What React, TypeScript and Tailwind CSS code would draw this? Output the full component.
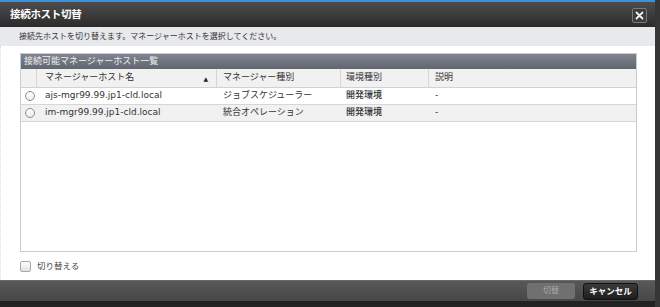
import React from 'react';

const jp = "font-['DejaVu_Sans','Noto_Sans_CJK_JP',sans-serif]";

const rows = [
  { host: 'ajs-mgr99.99.jp1-cld.local', kind: 'ジョブスケジューラー', env: '開発環境', desc: '-' },
  { host: 'im-mgr99.99.jp1-cld.local', kind: '統合オペレーション', env: '開発環境', desc: '-' },
];

const Radio = () => (
  <span className="block w-[10px] h-[10px] rounded-full border border-[#8a8a8a] bg-gradient-to-b from-white to-[#ececec]" />
);

export default function App() {
  return (
    <div className={`w-[660px] h-[307px] flex bg-white ${jp}`}>
      <div className="w-[655px] flex flex-col">
        <div className="h-[2px] bg-[#3f8fd4]" />
        <div className="h-[25px] flex items-center justify-between pl-[10px] pr-[8px] bg-gradient-to-b from-[#4d4d4d] to-[#2b2b2b]">
          <span className="text-[10.5px] font-bold text-white tracking-[-0.3px]">接続ホスト切替</span>
          <button className="w-[15px] h-[15px] mt-[1px] flex items-center justify-center rounded-[2px] border border-[#7a7a7a] bg-[#3c3c3c]">
            <svg width="9" height="9" viewBox="0 0 9 9">
              <path d="M1.5 1.5 L7.5 7.5 M7.5 1.5 L1.5 7.5" stroke="#f2f2f2" strokeWidth="1.8" strokeLinecap="round" />
            </svg>
          </button>
        </div>
        <div className="h-[19px] flex items-center pl-[19px] bg-[#e7e9ed] text-[8px] text-[#333]">
          接続先ホストを切り替えます。マネージャーホストを選択してください。
        </div>
        <div className="flex-1 flex flex-col pl-[19px] pr-[18px] pt-[7px] bg-white border-l border-dotted border-[#dcdcdc]">
          <div className="h-[199px] flex flex-col border border-[#c9cbd2] bg-white">
            <div className="h-[15px] flex items-center pl-[3px] bg-gradient-to-b from-[#80848e] to-[#626670] text-[9px] text-[#eef0f3]">
              接続可能マネージャーホスト一覧
            </div>
            <div className="h-[19px] flex text-[9px] text-[#333] bg-[#f1f1f1] border-b border-[#d2d2d2]">
              <div className="w-[16px] border-r border-[#d6d6d6]" />
              <div className="w-[180px] flex items-center justify-between pl-[8px] pr-[8px] border-r border-[#d6d6d6]">
                <span>マネージャーホスト名</span>
                <span className="text-[6px] text-[#222]">▲</span>
              </div>
              <div className="w-[124px] flex items-center pl-[6px] border-r border-[#d6d6d6]">マネージャー種別</div>
              <div className="w-[88px] flex items-center pl-[5px] border-r border-[#d6d6d6]">環境種別</div>
              <div className="flex-1 flex items-center pl-[6px]">説明</div>
            </div>
            {rows.map((r, i) => (
              <div
                key={r.host}
                className={`h-[17px] flex text-[9px] text-[#333] border-b border-[#d6d6d6] ${i % 2 ? 'bg-[#f1f1f1]' : 'bg-white'}`}
              >
                <div className="w-[16px] flex items-center justify-center pl-[1px]">
                  <Radio />
                </div>
                <div className="w-[180px] flex items-center pl-[8px]">{r.host}</div>
                <div className="w-[124px] flex items-center pl-[6px]">{r.kind}</div>
                <div className="w-[88px] flex items-center pl-[5px] font-medium text-[#333]">{r.env}</div>
                <div className="flex-1 flex items-center pl-[6px]">{r.desc}</div>
              </div>
            ))}
          </div>
          <label className="h-[28px] flex items-center gap-[6px] text-[8.5px] text-[#444]">
            <span className="block w-[11px] h-[11px] rounded-[2px] border border-[#a8a8a8] bg-gradient-to-b from-white to-[#e2e2e2]" />
            切り替える
          </label>
        </div>
        <div className="h-[21px] flex items-center justify-end gap-[8px] pr-[17px] border-t border-[#6a6a6a] bg-gradient-to-b from-[#585858] to-[#474747]">
          <button className="w-[48px] h-[16px] rounded-[3px] bg-[#707070] text-[8px] text-[#a8a8a8]">切替</button>
          <button className="w-[55px] h-[17px] rounded-[3px] border border-[#111] bg-gradient-to-b from-[#3a3a3a] to-[#1e1e1e] text-[8.5px] font-bold text-white">
            キャンセル
          </button>
        </div>
        <div className="flex-1 bg-[#222]" />
      </div>
      <div className="w-[5px] bg-[#363636]" />
    </div>
  );
}
